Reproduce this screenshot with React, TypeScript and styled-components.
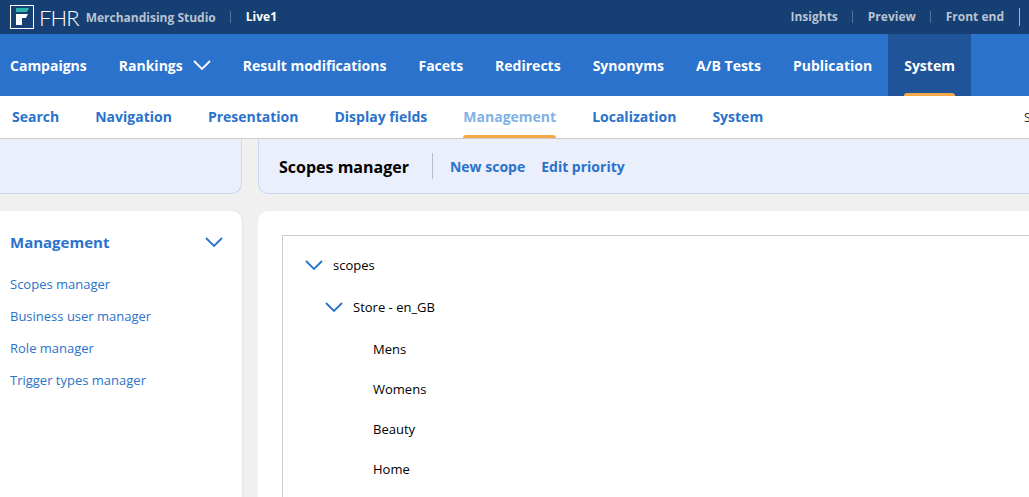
import React from "react";
import styled, { createGlobalStyle } from "styled-components";

const colors = {
  navy: "#163f73",
  blue: "#2a72cb",
  activeBlue: "#1f5498",
  orange: "#f5a847",
  panel: "#ebeffb",
  panelBorder: "#c9d9ef",
  page: "#f0f0f0",
  border: "#cccccc",
};

const GlobalStyle = createGlobalStyle`
  html, body {
    margin: 0;
    padding: 0;
    height: 100%;
    overflow: hidden;
    background: ${colors.page};
    font-family: "Open Sans", "Noto Sans", sans-serif;
  }
`;

const Page = styled.div`
  width: 1029px;
  height: 497px;
  overflow: hidden;
  display: flex;
  flex-direction: column;
  background: ${colors.page};
`;

const TopBar = styled.header`
  flex: none;
  height: 34px;
  background: ${colors.navy};
  display: flex;
  align-items: center;
  padding-left: 10px;
  font-size: 12px;
  font-weight: 600;
  color: #b9c3d1;
`;

const LogoWord = styled.span`
  margin-left: 5px;
  font-family: "Lato", sans-serif;
  font-weight: 300;
  font-size: 22px;
  letter-spacing: -0.9px;
  color: #ffffff;
`;

const Studio = styled.span`
  margin-left: 7px;
  font-weight: 700;
`;

const Live = styled.span`
  margin-left: 14px;
  padding-left: 15px;
  border-left: 1px solid #52719a;
  line-height: 12px;
  font-weight: 700;
  color: #ffffff;
`;

const TopLinks = styled.nav`
  margin-left: auto;
  display: flex;
  align-items: center;
`;

const TopLink = styled.span<{ $last?: boolean }>`
  padding: 0 14.5px;
  line-height: 12px;
  font-weight: 700;
  border-right: 1px solid ${({ $last }) => ($last ? colors.orange : "#52719a")};
  ${({ $last }) => $last && "line-height: 18px; margin-right: 9.5px;"}
`;

const MainNav = styled.nav`
  flex: none;
  height: 62px;
  background: ${colors.blue};
  display: flex;
  padding-left: 10px;
`;

const MainItem = styled.div<{ $active?: boolean }>`
  position: relative;
  display: flex;
  align-items: center;
  gap: 10px;
  margin-right: ${({ $active }) => ($active ? "0" : "32px")};
  margin-left: ${({ $active }) => ($active ? "-16px" : "0")};
  padding: ${({ $active }) => ($active ? "0 16px" : "0")};
  background: ${({ $active }) => ($active ? colors.activeBlue : "transparent")};
  color: #ffffff;
  font-size: 14px;
  font-weight: 700;
`;

const ActiveMark = styled.span`
  position: absolute;
  left: 16px;
  right: 16px;
  bottom: 0;
  height: 3px;
  border-radius: 3px 3px 0 0;
  background: ${colors.orange};
`;

const SubNav = styled.nav`
  flex: none;
  height: 43px;
  box-sizing: border-box;
  background: #ffffff;
  border-bottom: 1px solid ${colors.border};
  display: flex;
  gap: 36px;
  padding-left: 12px;
  position: relative;
`;

const SubItem = styled.div<{ $active?: boolean }>`
  position: relative;
  display: flex;
  align-items: center;
  padding-bottom: 2px;
  font-size: 14px;
  font-weight: 700;
  color: ${({ $active }) => ($active ? "#7fb3e6" : colors.blue)};
`;

const SubMark = styled.span`
  position: absolute;
  left: 0;
  right: 0;
  bottom: 0;
  height: 3px;
  border-radius: 3px 3px 0 0;
  background: ${colors.orange};
`;

const ClippedLabel = styled.span`
  position: absolute;
  left: 1024px;
  top: 13px;
  font-size: 12px;
  color: #333333;
`;

const Content = styled.main`
  flex: 1;
  min-height: 0;
  display: grid;
  grid-template-columns: 242px 1fr;
  grid-template-rows: 55px 1fr;
  column-gap: 16px;
  row-gap: 17px;
`;

const ToolPanel = styled.section<{ $side: "left" | "right" }>`
  box-sizing: border-box;
  background: ${colors.panel};
  border: 1px solid ${colors.panelBorder};
  border-top: none;
  ${({ $side }) =>
    $side === "left"
      ? "border-left: none; border-radius: 0 0 10px 0;"
      : "border-right: none; border-radius: 0 0 0 10px;"}
  display: flex;
  align-items: center;
  padding-left: 20px;
`;

const ToolTitle = styled.h1`
  margin: 0;
  padding: 2px 23px 0 0;
  font-size: 16px;
  font-weight: 700;
  color: #000000;
`;

const ToolLinks = styled.div`
  height: 26px;
  display: flex;
  align-items: center;
  gap: 16px;
  padding-left: 17px;
  border-left: 1px solid #b7bcc6;
`;

const ToolLink = styled.span`
  font-size: 14px;
  font-weight: 700;
  color: ${colors.blue};
`;

const SideCard = styled.aside`
  background: #ffffff;
  border-radius: 0 10px 0 0;
  padding: 19px 19px 0 10px;
  box-shadow: 1px 0 2px rgba(0, 0, 0, 0.05);
`;

const SideHeader = styled.div`
  display: flex;
  align-items: center;
  justify-content: space-between;
  height: 24px;
  margin-bottom: 14px;
`;

const SideTitle = styled.h2`
  margin: 0;
  font-size: 15px;
  font-weight: 700;
  color: ${colors.blue};
`;

const SideLink = styled.div`
  height: 32px;
  line-height: 32px;
  font-size: 13px;
  color: ${colors.blue};
`;

const MainCard = styled.section`
  background: #ffffff;
  border-radius: 10px 0 0 0;
  padding: 24px 0 0 24px;
`;

const TreeBox = styled.div`
  height: 300px;
  border: 1px solid ${colors.border};
  border-right: none;
  padding-top: 9px;
`;

const TreeRow = styled.div<{ $depth: number; $leaf?: boolean }>`
  display: flex;
  align-items: center;
  gap: 10px;
  height: 40px;
  margin-bottom: ${({ $leaf }) => ($leaf ? "0" : "2px")};
  padding-left: ${({ $depth }) => 22 + $depth * 20}px;
  font-size: 13px;
  color: #000000;
`;

const LeafLabel = styled.span`
  margin-left: 28px;
`;

function Chevron({ color, width = 18 }: { color: string; width?: number }) {
  return (
    <svg width={width} height={10} viewBox="0 0 18 10" fill="none">
      <path d="M1 1l8 8 8-8" stroke={color} strokeWidth="1.8" />
    </svg>
  );
}

function LogoMark() {
  return (
    <svg width="24" height="24" viewBox="0 0 24 24">
      <rect x="0.5" y="0.5" width="23" height="23" fill="none" stroke="#fff" />
      <path d="M6 3h13l-2 4H6z" fill="#2cb5ad" />
      <path d="M6 9h12l-2 4h-4v7H6z" fill="#fff" />
    </svg>
  );
}

const mainItems = [
  "Campaigns",
  "Rankings",
  "Result modifications",
  "Facets",
  "Redirects",
  "Synonyms",
  "A/B Tests",
  "Publication",
];
const subItems = [
  "Search",
  "Navigation",
  "Presentation",
  "Display fields",
  "Management",
  "Localization",
  "System",
];
const sideLinks = [
  "Scopes manager",
  "Business user manager",
  "Role manager",
  "Trigger types manager",
];
const leaves = ["Mens", "Womens", "Beauty", "Home"];

export default function App() {
  return (
    <Page>
      <GlobalStyle />
      <TopBar>
        <LogoMark />
        <LogoWord>FHR</LogoWord>
        <Studio>Merchandising Studio</Studio>
        <Live>Live1</Live>
        <TopLinks>
          <TopLink>Insights</TopLink>
          <TopLink>Preview</TopLink>
          <TopLink $last>Front end</TopLink>
        </TopLinks>
      </TopBar>
      <MainNav>
        {mainItems.map((item) => (
          <MainItem key={item}>
            {item}
            {item === "Rankings" && <Chevron color="#ffffff" />}
          </MainItem>
        ))}
        <MainItem $active>
          System
          <ActiveMark />
        </MainItem>
      </MainNav>
      <SubNav>
        {subItems.map((item) => (
          <SubItem key={item} $active={item === "Management"}>
            {item}
            {item === "Management" && <SubMark />}
          </SubItem>
        ))}
        <ClippedLabel>Search</ClippedLabel>
      </SubNav>
      <Content>
        <ToolPanel $side="left" />
        <ToolPanel $side="right">
          <ToolTitle>Scopes manager</ToolTitle>
          <ToolLinks>
            <ToolLink>New scope</ToolLink>
            <ToolLink>Edit priority</ToolLink>
          </ToolLinks>
        </ToolPanel>
        <SideCard>
          <SideHeader>
            <SideTitle>Management</SideTitle>
            <Chevron color={colors.blue} />
          </SideHeader>
          {sideLinks.map((link) => (
            <SideLink key={link}>{link}</SideLink>
          ))}
        </SideCard>
        <MainCard>
          <TreeBox>
            <TreeRow $depth={0}>
              <Chevron color={colors.blue} />
              scopes
            </TreeRow>
            <TreeRow $depth={1}>
              <Chevron color={colors.blue} />
              Store - en_GB
            </TreeRow>
            {leaves.map((leaf) => (
              <TreeRow key={leaf} $depth={2} $leaf>
                <LeafLabel>{leaf}</LeafLabel>
              </TreeRow>
            ))}
          </TreeBox>
        </MainCard>
      </Content>
    </Page>
  );
}
